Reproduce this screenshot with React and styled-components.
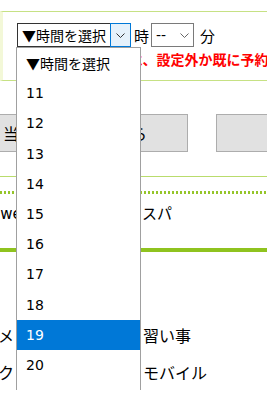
import React from "react";
import styled, { createGlobalStyle } from "styled-components";

const GlobalStyle = createGlobalStyle`
  html, body {
    margin: 0;
    padding: 0;
    background: #fff;
    overflow: hidden;
  }
  body {
    font-family: "DejaVu Sans", "Noto Sans CJK JP", sans-serif;
    font-size: 14px;
    color: #000;
  }
`;

const hours = ["", "11", "12", "13", "14", "15", "16", "17", "18", "19", "20", "21", "22"];

const Chevron = ({ color = "#444" }) => (
  <svg width="9" height="5" viewBox="0 0 9 5">
    <polyline points="0.5,0.5 4.5,4.5 8.5,0.5" fill="none" stroke={color} strokeWidth="1" />
  </svg>
);

const Placeholder = () => (
  <>
    <Tri>▼</Tri>時間を選択
  </>
);

const App = () => {
  return (
    <Page>
      <GlobalStyle />
      <FormBox>
        <ControlRow>
          <SelectWrap>
            <HourSelect>
              <SelectText>
                <Placeholder />
              </SelectText>
              <ArrowBox>
                <Chevron color="#333" />
              </ArrowBox>
            </HourSelect>
            <OptionList>
              {hours.map((h) => (
                <Option key={h || "none"} selected={h === "19"}>
                  {h || <Placeholder />}
                </Option>
              ))}
            </OptionList>
          </SelectWrap>
          <Unit>時</Unit>
          <MinuteSelect>
            <span>--</span>
            <Chevron color="#666" />
          </MinuteSelect>
          <Unit last>分</Unit>
        </ControlRow>
        <ErrorText>※選択された時間は、設定外か既に予約済みです。</ErrorText>
      </FormBox>

      <ButtonRow>
        <GrayButton>当日の予約はこちら</GrayButton>
        <GrayButton>確認する</GrayButton>
      </ButtonRow>

      <ThinRule />
      <DottedRule />

      <LinkRow>
        <span>Shower</span>
        <span>スパ</span>
      </LinkRow>

      <ThickRule />

      <CategoryGrid>
        <span>グルメ</span>
        <span>習い事</span>
        <span>ブック</span>
        <span>モバイル</span>
      </CategoryGrid>
    </Page>
  );
};

export default App;

const Page = styled.div`
  width: 267px;
  padding-top: 11px;
`;

const FormBox = styled.div`
  border-top: 1px solid #c6e184;
  border-bottom: 1px solid #c6e184;
  border-left: 3px solid #f3f8d8;
  padding: 11px 0 11px 14px;
`;

const ControlRow = styled.div`
  display: flex;
  align-items: center;
  height: 24px;
`;

const SelectWrap = styled.div`
  position: relative;
  z-index: 5;
`;

const Tri = styled.span`
  font-family: "Noto Sans CJK JP", sans-serif;
`;

const HourSelect = styled.div`
  display: flex;
  align-items: stretch;
  width: 114px;
  height: 24px;
  box-sizing: border-box;
  border: 1px solid #333;
  border-right: none;
  background: #fff;
`;

const SelectText = styled.div`
  flex: 1;
  padding-left: 4px;
  line-height: 22px;
  white-space: nowrap;
  overflow: hidden;
`;

const ArrowBox = styled.div`
  display: flex;
  align-items: center;
  justify-content: center;
  width: 21px;
  margin: -1px 0;
  box-sizing: border-box;
  border: 1px solid #0078d7;
  background: #e5f1fb;
`;

const OptionList = styled.div`
  position: absolute;
  top: 24px;
  left: -1px;
  width: 125px;
  box-sizing: border-box;
  border: 1px solid #a0a0a0;
  background: #fff;
`;

const Option = styled.div`
  display: flex;
  align-items: center;
  height: 30.2px;
  padding-left: 9px;
  white-space: nowrap;
  background: ${(props) => (props.selected ? "#0078d7" : "#fff")};
  color: ${(props) => (props.selected ? "#fff" : "#000")};
`;

const Unit = styled.span`
  font-size: 15px;
  margin-left: ${(props) => (props.last ? "6px" : "3px")};
  margin-right: ${(props) => (props.last ? "0" : "2px")};
`;

const MinuteSelect = styled.div`
  display: flex;
  align-items: center;
  justify-content: space-between;
  width: 43px;
  height: 24px;
  box-sizing: border-box;
  border: 1px solid #7a7a7a;
  padding: 0 4px;
  line-height: 22px;
`;

const ErrorText = styled.div`
  margin-top: 4px;
  line-height: 18px;
  color: #ff0000;
  font-weight: bold;
  white-space: nowrap;
`;

const ButtonRow = styled.div`
  display: flex;
  gap: 28px;
  margin-top: 33px;
  margin-left: -38px;
`;

const GrayButton = styled.button`
  flex-shrink: 0;
  width: 226px;
  height: 38px;
  border: 1px solid #adadad;
  background: #e1e1e1;
  font-family: "Noto Sans CJK JP", sans-serif;
  font-size: 16px;
  color: #000;
  padding: 0;
  white-space: nowrap;
`;

const ThinRule = styled.div`
  margin-top: 24px;
  height: 1px;
  background: #b9dc6c;
`;

const DottedRule = styled.div`
  margin-top: 14px;
  height: 3px;
  background: repeating-linear-gradient(90deg, #95c52a 0 2.5px, transparent 2.5px 4px);
`;

const LinkRow = styled.div`
  display: grid;
  grid-template-columns: 170px 1fr;
  margin-left: -28px;
  padding: 10px 0 24px;
  font-size: 15px;
  line-height: 20px;
  white-space: nowrap;
`;

const ThickRule = styled.div`
  height: 4px;
  background: #8fc31f;
`;

const CategoryGrid = styled.div`
  display: grid;
  grid-template-columns: 177px 1fr;
  grid-auto-rows: 37px;
  align-items: center;
  margin-left: -34px;
  padding-top: 64px;
  font-size: 16px;
  white-space: nowrap;
`;
